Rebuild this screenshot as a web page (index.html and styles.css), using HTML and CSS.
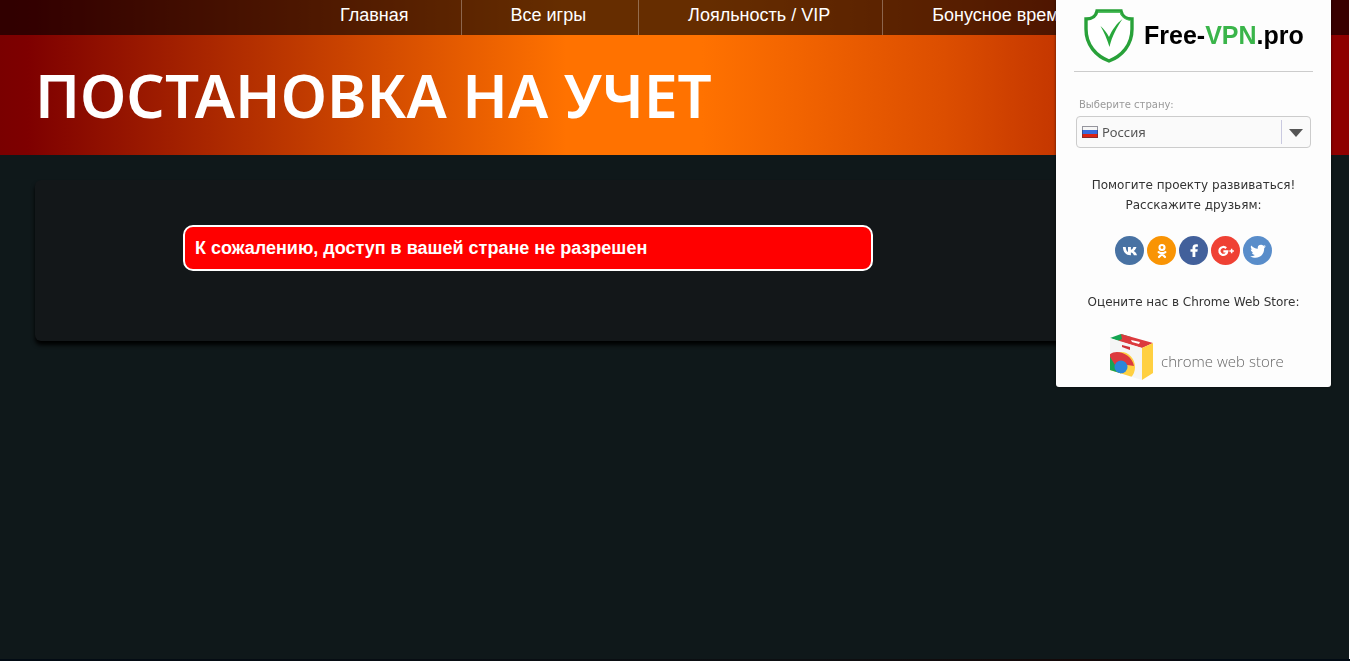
FILE: index.html
```html
<!DOCTYPE html>
<html lang="ru">
<head>
    <meta charset="UTF-8">
    <meta name="viewport" content="width=device-width, initial-scale=1.0">
    <title>Постановка на учет</title>
    <link rel="stylesheet" href="styles.css">
</head>
<body>
    <header class="header">
        <nav class="main-nav">
            <a href="#">Главная</a>
            <a href="#">Все игры</a>
            <a href="#">Лояльность / VIP</a>
            <a href="#">Бонусное время</a>
        </nav>
        <h1 class="page-title">Постановка на учет</h1>
    </header>

    <main class="content">
        <section class="panel">
            <p class="alert" role="alert">К сожалению, доступ в вашей стране не разрешен</p>
        </section>
    </main>

    <footer class="footer"></footer>

    <!-- VPN popup -->
    <aside class="vpn">
        <div class="vpn-logo">
            <svg class="vpn-shield" viewBox="0 0 50 54" aria-hidden="true">
                <path d="M13 2H37C38 7 42 10 48 10V20C48 36 38 47 25 52C12 47 2 36 2 20V10C8 10 12 7 13 2Z" fill="#fff" stroke="#28a139" stroke-width="3.4"/>
                <path d="M14 3H36C37.500 8 42 11 47 11.500" fill="none" stroke="#4cc35c" stroke-width="1"/>
                <path d="M16.500 17C20 20 23 24 25 28C28 21 33 14 38.500 10C33 18 28 27 25.500 38C23 30 20 23 16.500 17Z" fill="#28a83c"/>
            </svg>
            <span class="vpn-name">Free-<b>VPN</b>.pro</span>
        </div>

        <label class="vpn-label" for="country">Выберите страну:</label>
        <div class="vpn-country">
            <svg class="flag" viewBox="0 0 16 12" aria-hidden="true">
                <rect width="16" height="12" fill="#f6f6f6"/>
                <rect y="4" width="16" height="4" fill="#3a6bdc"/>
                <rect y="8" width="16" height="4" fill="#dc2414"/>
                <rect x=".5" y=".5" width="15" height="11" fill="none" stroke="#334" stroke-opacity=".5"/>
            </svg>
            <select id="country">
                <option>Россия</option>
            </select>
            <svg class="arrow" viewBox="0 0 29 24" aria-hidden="true">
                <path d="M.5 0V24" stroke="#c9c9e0"/>
                <path d="M8 9H22L15 17Z" fill="#555"/>
            </svg>
        </div>

        <p class="vpn-text">Помогите проекту развиваться!<br>Расскажите друзьям:</p>

        <div class="social">
            <a href="#" class="vk" aria-label="ВКонтакте">
                <svg viewBox="0 0 24 24"><path d="M12.800 17.500C6.600 17.500 3 13.400 2.500 6.500H6.300C6.500 10.800 8.100 12.800 9.300 13.200V6.500H13.200V10.300C14.500 10.100 15.900 8.400 16.600 6.500H20.600C20 9.100 18.100 11.100 16.800 11.900C18.100 12.600 20.300 14.200 21.400 17.500H17.200C16.500 15.500 15 14.100 13.200 13.900V17.500Z"/></svg>
            </a>
            <a href="#" class="ok" aria-label="Одноклассники">
                <svg viewBox="0 0 24 24"><path fill-rule="evenodd" d="M12 2.500A4.700 4.700 0 1 0 12 12A4.700 4.700 0 1 0 12 2.500ZM12 5.300A1.900 1.900 0 1 1 12 9.200A1.900 1.900 0 1 1 12 5.300Z"/><path d="M7.500 13.500Q12 16.500 16.500 13.500M12 16L8 20M12 16L16 20" fill="none" stroke="#fff" stroke-width="3" stroke-linecap="round"/></svg>
            </a>
            <a href="#" class="fb" aria-label="Facebook">
                <svg viewBox="0 0 24 24"><path d="M13.800 20V13H16.500L17 9.500H13.800V8C13.800 6.900 14.200 6.300 15.600 6.300H17.200V3.300C16.800 3.200 15.800 3.100 14.800 3.100C12 3.100 10 4.700 10 7.500V9.500H7.300V13H10V20Z"/></svg>
            </a>
            <a href="#" class="gp" aria-label="Google+">
                <svg viewBox="0 0 24 24"><path d="M12.200 8.200A5.300 5.300 0 1 0 13.700 12.600H8.500" fill="none" stroke="#fff" stroke-width="3"/><path d="M16.500 11H18.500V9H20.500V11H22.500V13H20.500V15H18.500V13H16.500Z"/></svg>
            </a>
            <a href="#" class="tw" aria-label="Twitter">
                <svg viewBox="0 0 24 24"><path d="M22.500 5.800C21.700 6.100 20.900 6.300 20 6.500C20.900 5.900 21.600 5.100 21.900 4.100C21.100 4.600 20.200 4.900 19.200 5.100A4.300 4.300 0 0 0 11.800 9C8.200 8.800 5.100 7.100 3 4.600C1.800 6.700 2.500 9 4.300 10.300C3.600 10.300 2.900 10.100 2.400 9.800C2.400 11.900 3.900 13.700 5.800 14.100C5.200 14.300 4.500 14.300 3.900 14.200C4.400 15.900 6 17.100 7.900 17.200C6.100 18.600 3.900 19.200 1.600 18.900C11 24.500 20.500 18.500 20.300 8C21.200 7.400 21.900 6.700 22.500 5.800Z"/></svg>
            </a>
        </div>

        <p class="vpn-text">Оцените нас в Chrome Web Store:</p>

        <a href="#" class="store">
            <svg viewBox="0 0 44 48" aria-hidden="true">
                <defs>
                    <clipPath id="front"><path d="M1 5L33 15V47L1 37Z"/></clipPath>
                </defs>
                <path d="M1 5L12 1L22 4L12 9Z" fill="#15a552"/>
                <path d="M12 1L44 10L33 15L9 8L13 6Z" fill="#dc3a3e"/>
                <path d="M22 7L31 9L30 11L23 9Z" fill="#fff"/>
                <path d="M1 5L33 15V47L1 37Z" fill="#f5f5f5"/>
                <g clip-path="url(#front)">
                    <ellipse cx="12" cy="34" rx="14" ry="15" fill="#ffd041"/>
                    <path d="M12 34L0 20V40L12 46Z" fill="#15a552"/>
                    <path d="M0 22C7 15 23 21 25 33L12 31L6 32Z" fill="#dc3a3e"/>
                    <circle cx="12" cy="34" r="6.500" fill="#2b86d9"/>
                </g>
                <path d="M13 12L21 14V17L13 14Z" fill="#cf3038"/>
                <path d="M33 15L44 10V40L33 47Z" fill="#ffd041"/>
            </svg>
            <span>chrome web store</span>
        </a>
    </aside>
</body>
</html>
```
FILE: styles.css
```css
* {
    box-sizing: border-box;
}

body {
    margin: 0;
    min-height: 100vh;
    display: flex;
    flex-direction: column;
    background: #0f181a;
    color: #fff;
    font-family: "Liberation Sans", Arial, sans-serif;
    font-size: 18px;
    overflow-x: hidden;
}

/* header */
.header {
    border-right: 1px solid #fff;
    background: linear-gradient(to right, #7a0000 0%, #7e0000 2%, #ff7200 42%, #ff7200 52%, #f46600 58%, #dc4e00 70%, #8e0000 98%, #8e0000 100%);
}

.main-nav {
    display: flex;
    height: 35px;
    padding-left: 291px;
    background: rgba(0, 0, 0, 0.6);
}

.main-nav a {
    padding: 5px 52px 0 49px;
    border-right: 1px solid rgba(255, 255, 255, 0.3);
    color: #fff;
    line-height: 20px;
    text-decoration: none;
    white-space: nowrap;
}

.main-nav a:last-child {
    border-right: none;
}

.page-title {
    margin: 0;
    padding: 0 35px;
    font-family: "Noto Sans", "Open Sans", sans-serif;
    font-size: 60px;
    font-weight: 600;
    line-height: 120px;
    text-transform: uppercase;
}

/* content */
.content {
    flex: 1;
    padding: 25px 35px;
    border-right: 1px solid #fff;
}

.panel {
    padding: 45px 148px 70px;
    border-radius: 6px;
    background: #131719;
    box-shadow: 0 4px 4px #000;
}

.alert {
    max-width: 690px;
    margin: 0;
    padding: 10px;
    border: 2px solid #fff;
    border-radius: 10px;
    background: #f00;
    font-weight: bold;
    line-height: 22px;
}

.footer {
    height: 2px;
    background: linear-gradient(to right, #020b14, #0d0f12 60%, #140808 80%, #020b14 90%);
}

/* vpn popup */
.vpn {
    position: fixed;
    top: 0;
    right: 19px;
    width: 275px;
    padding: 0 18px 6px;
    border-radius: 0 0 3px 3px;
    background: #fdfdfd;
    box-shadow: 0 0 3px rgba(0, 0, 0, 0.6);
    color: #333;
    font-family: "DejaVu Sans", Verdana, sans-serif;
    font-size: 12px;
}

.vpn-logo {
    display: flex;
    align-items: center;
    gap: 10px;
    height: 72px;
    padding-left: 10px;
    border-bottom: 1px solid #ccc;
}

.vpn-shield {
    flex-shrink: 0;
    width: 50px;
    height: 54px;
}

.vpn-name {
    color: #000;
    font-family: "Liberation Sans Narrow", "Liberation Sans", sans-serif;
    font-size: 25px;
    font-weight: bold;
    white-space: nowrap;
}

.vpn-name b {
    color: #3ab54a;
}

.vpn-label {
    display: block;
    margin: 26px 5px 4px;
    color: #999;
    font-size: 10px;
    line-height: 14px;
}

.vpn-country {
    display: flex;
    align-items: center;
    height: 32px;
    margin: 0 2px;
    padding-left: 5px;
    border: 1px solid #ccc;
    border-radius: 4px;
    background: #fafafa;
}

.flag {
    width: 16px;
    height: 12px;
}

.vpn-country select {
    flex: 1;
    padding: 0 4px;
    border: none;
    background: none;
    color: #555;
    font-family: "Noto Sans", sans-serif;
    font-size: 13px;
    appearance: none;
}

.arrow {
    width: 29px;
    height: 24px;
}

.vpn-text {
    margin: 27px 0 21px;
    line-height: 20px;
    text-align: center;
    white-space: nowrap;
}

.social {
    display: flex;
    justify-content: center;
    gap: 3px;
}

.social a {
    display: flex;
    align-items: center;
    justify-content: center;
    width: 29px;
    height: 29px;
    border-radius: 50%;
}

.social svg {
    width: 18px;
    height: 18px;
    fill: #fff;
}

.vk { background: #4872a3; }
.ok { background: #f99404; }
.fb { background: #42609b; }
.gp { background: #ef4134; }
.tw { background: #598dca; }

.store {
    display: flex;
    align-items: center;
    gap: 8px;
    padding-left: 35px;
    color: #666;
    font-family: "Open Sans", "Noto Sans", sans-serif;
    font-size: 15px;
    font-weight: 300;
    text-decoration: none;
    white-space: nowrap;
}

.store svg {
    width: 44px;
    height: 48px;
}

.store span {
    padding-top: 8px;
}
```
